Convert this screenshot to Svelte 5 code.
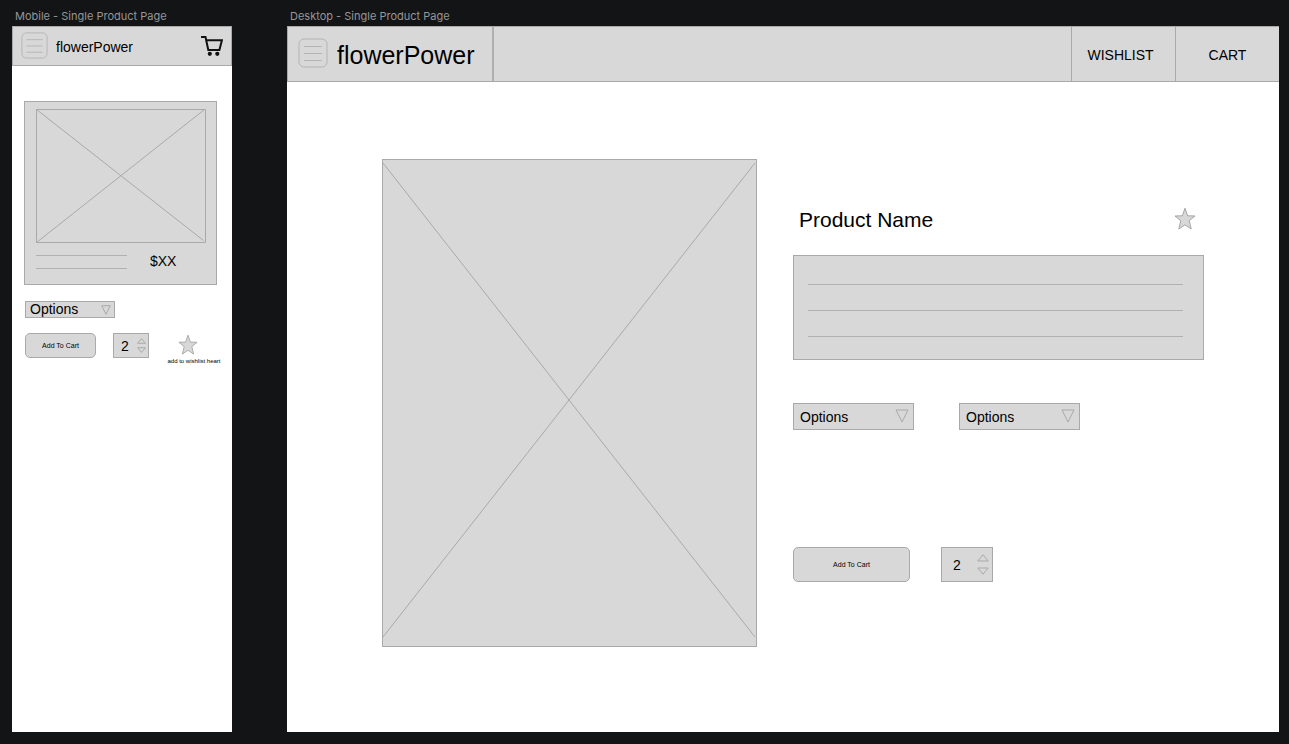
<script>
  let mobileQuantity = $state(2);
  let desktopQuantity = $state(2);
</script>

{#snippet menuIcon()}
  <svg viewBox="0 0 30 30" fill="none" stroke="currentColor" aria-hidden="true">
    <rect x="1" y="1" width="28" height="28" rx="5" />
    <path d="M6 8.5h18M6 15.5h18M6 22.5h18" />
  </svg>
{/snippet}

{#snippet star()}
  <svg viewBox="0 0 22 24" aria-hidden="true">
    <path d="M11 1.2 13.6 8.8 21 9 15.2 13.7 17.2 22 11 17.8 4.8 22 6.8 13.7 1 9 8.4 8.8Z" fill="#d8d8d8" stroke="#a6a6a6" />
  </svg>
{/snippet}

{#snippet options(id)}
  <div class="select">
    <select {id} aria-label="Options"><option>Options</option></select>
    <svg viewBox="0 0 14 14" fill="none" stroke="currentColor" aria-hidden="true"><path d="M1 1H13L7 13Z" vector-effect="non-scaling-stroke" /></svg>
  </div>
{/snippet}

{#snippet arrow(down)}
  <svg viewBox="0 0 12 8" fill="none" stroke="currentColor" aria-hidden="true">
    <path d={down ? 'M.8 1H11.2L6 7.2Z' : 'M.8 7H11.2L6 .8Z'} vector-effect="non-scaling-stroke" />
  </svg>
{/snippet}

<main class="canvas">
  <section class="artboard mobile">
    <h2>Mobile - Single Product Page</h2>
    <div class="page">
      <header>
        <button class="menu" aria-label="Menu">{@render menuIcon()}</button>
        <a class="brand" href="#home">flowerPower</a>
        <a class="cart" href="#cart" aria-label="Cart">
          <svg viewBox="0 0 22 22" fill="none" stroke="#111" stroke-width="2" aria-hidden="true">
            <path d="M0 2H4.5L7.3 14.9H18.4L20.9 5.2H5.2" />
            <circle cx="8.8" cy="18.8" r="2.1" fill="#111" stroke="none" />
            <circle cx="16.3" cy="18.8" r="2.1" fill="#111" stroke="none" />
          </svg>
        </a>
      </header>
      <div class="content">
        <article class="card">
          <svg class="photo" viewBox="0 0 170 134" preserveAspectRatio="none" fill="none" stroke="currentColor" aria-hidden="true">
            <path d="M.5.5H169.5V133.5H.5ZM.5.5 167.5 131.5M168.5.5.5 133.5" />
          </svg>
          <div class="summary">
            <div class="lines"><i></i><i></i></div>
            <span>$XX</span>
          </div>
        </article>
        {@render options('mobile-options')}
        <div class="actions">
          <button class="add">Add To Cart</button>
          <div class="quantity">
            <input type="number" aria-label="Quantity" bind:value={mobileQuantity} />
            <div class="steps">
              <button aria-label="Increase" onclick={() => mobileQuantity++}>{@render arrow(false)}</button>
              <button aria-label="Decrease" onclick={() => mobileQuantity--}>{@render arrow(true)}</button>
            </div>
          </div>
          <button class="wish">{@render star()}<span>add to wishlist heart</span></button>
        </div>
      </div>
    </div>
  </section>

  <section class="artboard desktop">
    <h2>Desktop - Single Product Page</h2>
    <div class="page">
      <header>
        <div class="identity">
          <button class="menu" aria-label="Menu">{@render menuIcon()}</button>
          <a class="brand" href="#home">flowerPower</a>
        </div>
        <nav>
          <a class="wishlist" href="#wishlist">WISHLIST</a>
          <a href="#cart">CART</a>
        </nav>
      </header>
      <div class="content">
        <div class="picture">
          <svg viewBox="0 0 373 486" preserveAspectRatio="none" fill="none" stroke="currentColor" aria-hidden="true">
            <path d="M0 3 372 477M372 3 0 477" />
          </svg>
        </div>
        <div class="details">
          <div class="title">
            <h1>Product Name</h1>
            <button class="wish" aria-label="Add to wishlist">{@render star()}</button>
          </div>
          <div class="description"><i></i><i></i><i></i></div>
          <div class="choices">
            {@render options('first-options')}
            {@render options('second-options')}
          </div>
          <div class="actions">
            <button class="add">Add To Cart</button>
            <div class="quantity">
              <input type="number" aria-label="Quantity" bind:value={desktopQuantity} />
              <div class="steps">
                <button aria-label="Increase" onclick={() => desktopQuantity++}>{@render arrow(false)}</button>
                <button aria-label="Decrease" onclick={() => desktopQuantity--}>{@render arrow(true)}</button>
              </div>
            </div>
          </div>
        </div>
      </div>
    </div>
  </section>
</main>

<style>
  :global(body) { margin: 0; background: #131416; }
  * { box-sizing: border-box; }
  svg { display: block; }
  button, input, select { font: inherit; color: #000; margin: 0; padding: 0; border: 0; background: none; }
  button { cursor: pointer; }
  a { color: #000; text-decoration: none; }

  .canvas {
    --fill: #d8d8d8;
    --line: #a9a9a9;
    display: flex;
    gap: 55px;
    min-height: 100vh;
    padding: 6px 10px 12px 12px;
    font: 14px/16px "Liberation Sans", Arial, sans-serif;
  }
  .artboard { display: flex; flex-direction: column; }
  .mobile { flex: 0 0 220px; }
  .desktop { flex: 1; min-width: 0; }
  h2 {
    margin: 0;
    padding-left: 3px;
    font: 400 11px/20px Inter, sans-serif;
    color: #969696;
    white-space: nowrap;
  }
  .page { flex: 1; background: #fff; }
  header { display: flex; align-items: center; background: var(--fill); border: 1px solid var(--line); }
  .menu { color: #b4b4b4; }

  .select { position: relative; color: var(--line); }
  .select select {
    display: block;
    appearance: none;
    width: 100%;
    background: var(--fill);
    border: 1px solid var(--line);
    border-radius: 0;
  }
  .select svg { position: absolute; pointer-events: none; }
  .add { background: var(--fill); border: 1px solid var(--line); border-radius: 5px; font-size: 7px; }
  .quantity { display: flex; align-items: center; background: var(--fill); border: 1px solid var(--line); }
  .quantity input { flex: 1; min-width: 0; appearance: textfield; }
  .quantity input::-webkit-inner-spin-button { display: none; }
  .steps { display: flex; flex-direction: column; color: var(--line); }
  .steps button { color: inherit; }
  i { display: block; height: 1px; background: #b0b0b0; }

  .mobile header { height: 40px; padding: 0 8px; }
  .mobile .menu svg { width: 27px; height: 27px; }
  .mobile .menu { margin-bottom: 2px; }
  .mobile .brand { margin-left: 8px; padding-top: 2px; }
  .cart { margin-left: auto; }
  .cart svg { width: 22px; height: 22px; }
  .mobile .content { padding: 35px 12px; }
  .card { margin-right: 3px; padding: 7px 10px 15px 11px; background: var(--fill); border: 1px solid var(--line); color: var(--line); }
  .photo { width: 100%; height: 134px; }
  .summary { display: flex; gap: 23px; align-items: center; padding-top: 9px; color: #000; }
  .summary .lines { display: grid; gap: 12px; width: 91px; padding-top: 3px; }
  .mobile .select { width: 90px; margin: 16px 0 0 1px; }
  .mobile .select select { height: 17px; padding-left: 4px; line-height: 15px; }
  .mobile .select svg { top: 4px; right: 4px; width: 10px; height: 10px; }
  .mobile .actions { display: flex; align-items: flex-start; margin: 15px 0 0 1px; }
  .mobile .add { width: 71px; height: 25px; }
  .mobile .quantity { width: 36px; height: 25px; margin-left: 17px; padding: 0 2px 0 7px; }
  .mobile .steps { gap: 3px; }
  .mobile .steps svg { width: 9px; height: 6px; }
  .mobile .wish { display: flex; flex-direction: column; align-items: center; width: 50px; margin-left: 20px; font-size: 6px; line-height: 8px; white-space: nowrap; }
  .mobile .wish svg { width: 20px; height: 22px; margin: 1px 12px 1px 0; }

  .desktop header { height: 56px; border-right: 0; }
  .identity { display: flex; align-items: center; align-self: stretch; width: 206px; padding-left: 10px; border-right: 2px solid #b0b0b0; }
  .desktop .menu svg { width: 30px; height: 30px; }
  .desktop .menu { margin-bottom: 2px; }
  .desktop .brand { margin-left: 9px; padding-top: 2px; font-size: 25px; line-height: 28px; }
  nav { display: flex; align-self: stretch; margin-left: auto; }
  nav a { display: grid; place-items: center; width: 104px; padding-top: 2px; border-left: 1px solid var(--line); }
  nav .wishlist { padding-right: 6px; }
  .desktop .content { display: flex; align-items: flex-start; gap: 36px; padding: 77px 75px 85px 95px; }
  .picture { flex: 373; min-width: 0; background: var(--fill); border: 1px solid var(--line); color: var(--line); }
  .picture svg { width: 100%; height: 486px; }
  .details { flex: 411; min-width: 0; padding-top: 47px; }
  .title { display: flex; align-items: center; justify-content: space-between; padding: 0 8px 0 6px; }
  h1 { margin: 0; padding-top: 2px; font-size: 21px; line-height: 24px; font-weight: 400; }
  .title svg { width: 22px; height: 24px; }
  .description { display: grid; gap: 25px; margin-top: 23px; padding: 28px 20px 22px 14px; background: var(--fill); border: 1px solid var(--line); }
  .choices { display: flex; gap: 45px; margin-top: 43px; }
  .desktop .select { width: 121px; }
  .desktop .select select { height: 27px; padding-left: 6px; }
  .desktop .select svg { top: 6px; right: 5px; width: 14px; height: 14px; }
  .desktop .actions { display: flex; gap: 31px; margin-top: 117px; }
  .desktop .add { width: 117px; height: 35px; }
  .desktop .quantity { width: 52px; height: 35px; padding: 0 3px 0 11px; }
  .desktop .steps { gap: 5px; }
  .desktop .steps svg { width: 12px; height: 8px; }
</style>
